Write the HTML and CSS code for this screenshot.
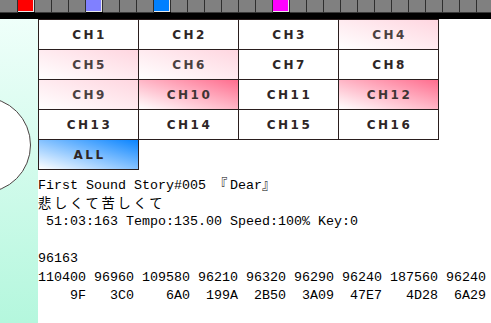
FILE: index.html
```html
<!DOCTYPE html>
<html>
  <head>
    <title>Channel Monitor</title>
    <link rel="stylesheet" href="styles.css">
  </head>

  <body>
    <!-- Key strip -->
    <div class="strip">
      <span class="key"></span>
      <span class="key red"></span>
      <span class="key"></span>
      <span class="key"></span>
      <span class="key"></span>
      <span class="key violet"></span>
      <span class="key"></span>
      <span class="key"></span>
      <span class="key"></span>
      <span class="key blue"></span>
      <span class="key"></span>
      <span class="key"></span>
      <span class="key"></span>
      <span class="key"></span>
      <span class="key"></span>
      <span class="key"></span>
      <span class="key magenta"></span>
      <span class="key"></span>
      <span class="key"></span>
      <span class="key"></span>
      <span class="key"></span>
      <span class="key"></span>
      <span class="key"></span>
      <span class="key"></span>
      <span class="key"></span>
      <span class="key"></span>
      <span class="key"></span>
      <span class="key"></span>
      <span class="key"></span>
    </div>

    <div class="main">
      <div class="side">
        <div class="disc"></div>
      </div>

      <div class="content">
        <!-- Channel buttons -->
        <div class="channels">
          <div class="ch">CH1</div>
          <div class="ch">CH2</div>
          <div class="ch">CH3</div>
          <div class="ch soft">CH4</div>
          <div class="ch soft">CH5</div>
          <div class="ch soft">CH6</div>
          <div class="ch">CH7</div>
          <div class="ch">CH8</div>
          <div class="ch soft">CH9</div>
          <div class="ch hot">CH10</div>
          <div class="ch">CH11</div>
          <div class="ch hot">CH12</div>
          <div class="ch">CH13</div>
          <div class="ch">CH14</div>
          <div class="ch">CH15</div>
          <div class="ch">CH16</div>
          <div class="ch all">ALL</div>
        </div>

        <!-- Song info -->
        <div class="info">
          <div class="line">First Sound Story#005 <span class="jp">『</span>Dear<span class="jp">』</span></div>
          <div class="line"><span class="jp">悲しくて苦しくて</span></div>
          <div class="line"> 51:03:163 Tempo:135.00 Speed:100% Key:0</div>
        </div>

        <div class="counts">
          <div class="line">96163</div>
          <div class="line">110400 96960 109580 96210 96320 96290 96240 187560 96240</div>
          <div class="line">    9F   3C0    6A0  199A  2B50  3A09  47E7   4D28  6A29</div>
        </div>
      </div>
    </div>
  </body>
</html>
```

FILE: styles.css
```css
* {
  margin: 0;
  padding: 0;
  box-sizing: border-box;
}

body {
  background: #fff;
  width: 491px;
  height: 323px;
  overflow: hidden;
}

.strip {
  display: flex;
  height: 19px;
  background: #000;
  overflow: hidden;
}

.key {
  flex: none;
  width: 17px;
  height: 13px;
  background: #808080;
  border-right: 1px solid #2e2e2e;
  border-bottom: 1px solid #3a3a3a;
}

.key:first-child {
  width: 18px;
}

.key.red,
.key.violet,
.key.blue,
.key.magenta {
  box-shadow: inset -1px -1px 0 #e8e8e8;
  height: 12px;
  border-bottom: none;
}

.key.red { background: #ff0000; }
.key.violet { background: #8080ff; }
.key.blue { background: #0080ff; }
.key.magenta { background: #ff00ff; }

.main {
  display: flex;
  height: 304px;
}

.side {
  position: relative;
  flex: none;
  width: 38px;
  background: linear-gradient(to bottom, #effffa, #b4f7dd);
  overflow: hidden;
}

.disc {
  position: absolute;
  left: -65px;
  top: 78px;
  width: 96px;
  height: 96px;
  border-radius: 50%;
  background: #fff;
  border: 1px solid #4a4242;
}

.content {
  flex: 1;
}

.channels {
  display: grid;
  grid-template-columns: repeat(4, 100px);
  grid-auto-rows: 30px;
  width: 401px;
  border-left: 1px solid #2a1e1e;
  border-top: 1px solid #2a1e1e;
}

.ch {
  display: flex;
  align-items: center;
  justify-content: center;
  border-right: 1px solid #2a1e1e;
  border-bottom: 1px solid #2a1e1e;
  font-family: "DejaVu Sans", sans-serif;
  font-weight: bold;
  font-size: 12px;
  letter-spacing: 2.5px;
  padding-left: 2px;
  color: #2e2626;
}

.ch.soft {
  background: linear-gradient(to top right, #ffffff, #ffd6e0);
  color: #4a4040;
}

.ch.hot {
  background: linear-gradient(to top right, #ffffff, #ff6d8e);
  color: #3e3434;
}

.ch.all {
  background: linear-gradient(to top right, #ffffff, #0a84ff);
}

.info,
.counts {
  font-family: "Liberation Mono", monospace;
  font-size: 13.33px;
  color: #000;
}

.line {
  white-space: pre;
}

.info {
  margin-top: 5px;
  line-height: 17px;
}

.counts {
  margin-top: 20px;
  line-height: 18.5px;
}

.jp {
  font-family: "Noto Sans CJK JP", sans-serif;
  letter-spacing: 2.67px;
}
```
